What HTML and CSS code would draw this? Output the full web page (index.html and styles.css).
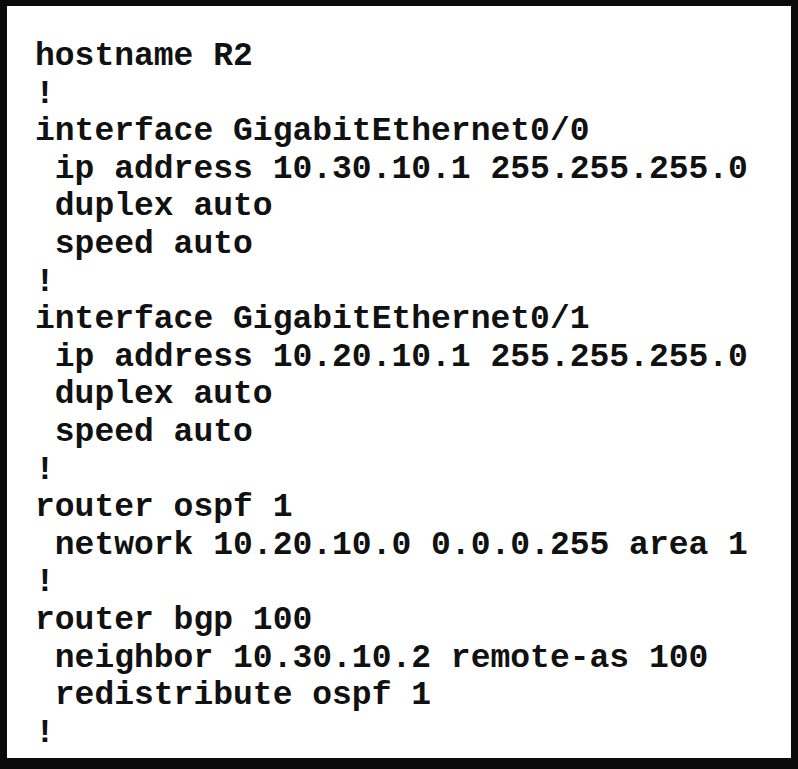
FILE: index.html
```html
<!DOCTYPE html>
<html>
<head>
<meta charset="utf-8">
<link rel="stylesheet" href="styles.css">
</head>
<body>
<div class="frame">
<pre class="config">hostname R2
!
interface GigabitEthernet0/0
 ip address 10.30.10.1 255.255.255.0
 duplex auto
 speed auto
!
interface GigabitEthernet0/1
 ip address 10.20.10.1 255.255.255.0
 duplex auto
 speed auto
!
router ospf 1
 network 10.20.10.0 0.0.0.255 area 1
!
router bgp 100
 neighbor 10.30.10.2 remote-as 100
 redistribute ospf 1
!</pre>
</div>
</body>
</html>
```
FILE: styles.css
```css
html, body {
  margin: 0;
  padding: 0;
  background: #ffffff;
}
.frame {
  box-sizing: border-box;
  width: 798px;
  height: 769px;
  border-style: solid;
  border-color: #0b0b0b;
  border-width: 6px 7px 11px 7px;
  background: #ffffff;
  padding: 32px 0 0 28px;
  overflow: hidden;
}
.config {
  margin: 0;
  font-family: "Courier New", "Nimbus Mono PS", "Nimbus Mono L", "FreeMono", "Liberation Mono", monospace;
  font-weight: bold;
  font-size: 33px;
  line-height: 37.6px;
  color: #111111;
  white-space: pre;
}
```
